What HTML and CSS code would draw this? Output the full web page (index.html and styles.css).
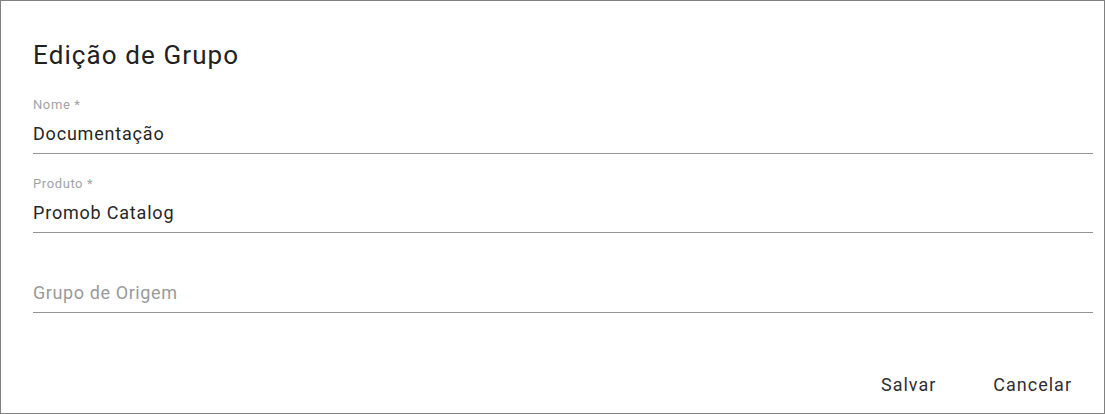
FILE: index.html
```html
<!DOCTYPE html>
<html lang="pt-BR">
<head>
  <meta charset="UTF-8">
  <meta name="viewport" content="width=device-width, initial-scale=1.0">
  <title>Edição de Grupo</title>
  <link rel="stylesheet" href="styles.css">
</head>
<body>

  <div class="dialog">
    <h1>Edição de Grupo</h1>

    <form class="group-form">
      <label class="field">
        <span class="field-label">Nome *</span>
        <input class="field-input" type="text" value="Documentação">
      </label>
      <label class="field">
        <span class="field-label">Produto *</span>
        <input class="field-input" type="text" value="Promob Catalog">
      </label>
      <label class="field">
        <span class="field-label"></span>
        <input class="field-input" type="text" placeholder="Grupo de Origem">
      </label>
    </form>

    <div class="actions">
      <button type="button" class="btn">Salvar</button>
      <button type="button" class="btn">Cancelar</button>
    </div>
  </div>

</body>
</html>
```

FILE: styles.css
```css
html, body {
  height: 100%;
}

body {
  font-family: Roboto, 'Liberation Sans', sans-serif;
  background-color: #fff;
  margin: 0;
  padding: 0;
  border: 1px solid #808080;
  box-sizing: border-box;
}

.dialog {
  padding: 38px 11px 0 32px;
  color: rgba(0, 0, 0, 0.87);
}

.dialog h1 {
  margin: 0;
  font-size: 26px;
  line-height: 32px;
  font-weight: 400;
  letter-spacing: 1.1px;
  color: #212121;
}

.group-form {
  margin-top: 26px;
  display: flex;
  flex-direction: column;
  gap: 22px;
}

.field {
  display: flex;
  flex-direction: column;
  gap: 9px;
  padding-bottom: 7px;
  border-bottom: 1px solid #949494;
}

.field:last-child {
  margin-top: 1px;
}

.field-label {
  font-size: 13px;
  line-height: 16px;
  height: 16px;
  letter-spacing: 0.6px;
  color: #a3a3a3;
}

.field-input {
  font-family: inherit;
  font-size: 18px;
  line-height: 24px;
  height: 24px;
  padding: 0;
  margin: 0;
  border: none;
  outline: none;
  background: transparent;
  letter-spacing: 0.8px;
  color: #262626;
}

.field-input::placeholder {
  color: #9a9a9a;
  letter-spacing: 0.6px;
}

.actions {
  margin-top: 54px;
  display: flex;
  justify-content: flex-end;
  gap: 25px;
  padding-right: 5px;
}

.btn {
  font-family: inherit;
  font-size: 18px;
  line-height: 36px;
  height: 36px;
  padding: 0 16px;
  border: none;
  background: transparent;
  letter-spacing: 1px;
  color: #2f2f2f;
  cursor: pointer;
}
```
